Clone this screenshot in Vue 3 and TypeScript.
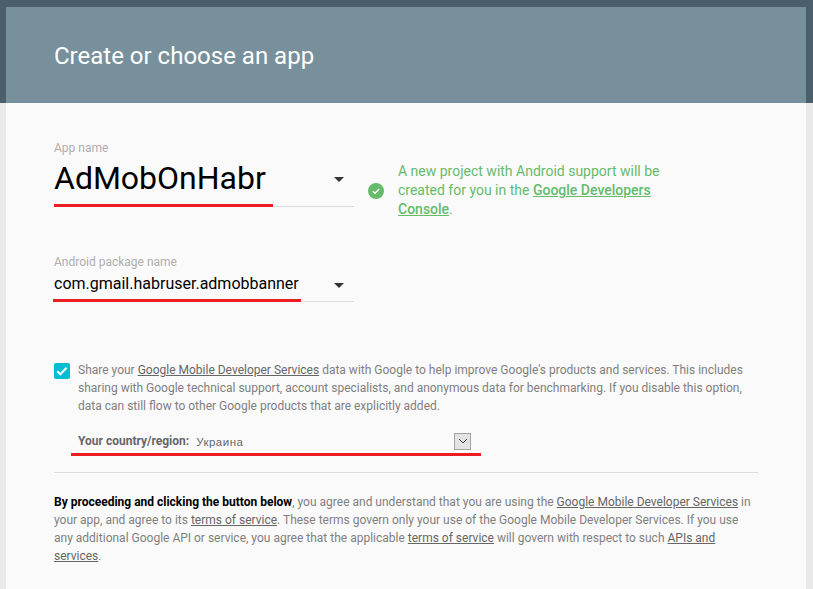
<script setup lang="ts">
const flag = true
</script>

<template>
  <div class="page">
    <div class="band"></div>
    <main class="card">
      <header class="head"><h1>Create or choose an app</h1></header>
      <div class="body">
        <div class="row-first">
          <div class="field first">
            <label>App name</label>
            <div class="value big">AdMobOnHabr<span class="caret"></span></div>
            <i class="mark m1"></i>
          </div>
          <div class="note">
            <svg width="16" height="16" viewBox="0 0 16 16" class="ok">
              <circle cx="8" cy="8" r="8" fill="#66bb6a" />
              <path d="M4.8 8.2l2.2 2.1 4.2-4.3" fill="none" stroke="#fff" stroke-width="1.4" />
            </svg>
            <p>A new project with Android support will be created for you in the <a href="#">Google Developers Console</a>.</p>
          </div>
        </div>
        <div class="field second">
          <label>Android package name</label>
          <div class="value mid">com.gmail.habruser.admobbanner<span class="caret"></span></div>
          <i class="mark m2"></i>
        </div>
        <div class="share">
          <span class="check" v-if="flag">
            <svg width="16" height="16" viewBox="0 0 16 16">
              <path d="M3.2 8.3l3.1 3 6.3-6.6" fill="none" stroke="#fff" stroke-width="2" />
            </svg>
          </span>
          <div class="share-text">
            <p>Share your <a href="#">Google Mobile Developer Services</a> data with Google to help improve Google's products and services. This includes sharing with Google technical support, account specialists, and anonymous data for benchmarking. If you disable this option, data can still flow to other Google products that are explicitly added.</p>
            <div class="country">
              <b>Your country/region:</b>
              <div class="select">
                <span>Украина</span>
                <span class="sel-btn">
                  <svg width="10" height="6" viewBox="0 0 10 6"><path d="M1 1l4 4 4-4" fill="none" stroke="#444" stroke-width="1" /></svg>
                </span>
              </div>
              <i class="mark m3"></i>
            </div>
          </div>
        </div>
        <hr />
        <p class="legal"><b>By proceeding and clicking the button below</b>, you agree and understand that you are using the <a href="#">Google Mobile Developer Services</a> in your app, and agree to its <a href="#">terms of service</a>. These terms govern only your use of the Google Mobile Developer Services. If you use any additional Google API or service, you agree that the applicable <a href="#">terms of service</a> will govern with respect to such <a href="#">APIs and services</a>.</p>
      </div>
    </main>
  </div>
</template>

<style scoped>
.page {
  position: relative;
  height: 589px;
  overflow: hidden;
  background: #e9e9e9;
  font-family: Roboto, "Noto Sans", sans-serif;
  padding: 7px 7px 0 6px;
  box-sizing: border-box;
}
.band {
  position: absolute;
  left: 0;
  right: 0;
  top: 0;
  height: 103px;
  background: #4a5f69;
}
.card {
  position: relative;
  background: #fafafa;
  height: 582px;
}
.head {
  height: 96px;
  box-sizing: border-box;
  background: #78909c;
  padding: 34px 48px 0;
}
h1 {
  margin: 0;
  font-size: 24px;
  line-height: 30px;
  font-weight: 400;
  color: #fff;
}
.body {
  padding: 38px 48px 0;
}
.row-first {
  display: flex;
  align-items: flex-start;
}
.field {
  position: relative;
  width: 300px;
}
label {
  display: block;
  font-size: 12px;
  line-height: 14px;
  color: #b0aeae;
}
.value {
  position: relative;
  border-bottom: 1px solid #ddd;
  color: #000;
}
.big {
  font-size: 32px;
  line-height: 47px;
  height: 51px;
}
.mid {
  font-size: 16px;
  line-height: 24px;
  margin-top: 3px;
  height: 29px;
}
.caret {
  position: absolute;
  right: 10px;
  top: 50%;
  margin-top: -4px;
  border-left: 5px solid transparent;
  border-right: 5px solid transparent;
  border-top: 5px solid #333;
}
.mark {
  position: absolute;
  display: block;
  height: 3px;
  background: #ed1c24;
}
.m1 { left: 0; width: 219px; bottom: 0; }
.m2 { left: -1px; width: 248px; bottom: 0; }
.m3 { left: -7px; width: 410px; top: 21px; }
.note {
  display: flex;
  align-items: center;
  margin-left: 14px;
  margin-top: 21px;
  color: #66bb6a;
}
.ok {
  flex: none;
  margin-right: 14px;
}
.note p {
  margin: 0;
  width: 272px;
  font-size: 14px;
  line-height: 19px;
}
.note a {
  color: #66bb6a;
  font-weight: 500;
}
.second {
  margin-top: 36px;
}
.share {
  display: flex;
  margin-top: 59px;
}
.check {
  flex: none;
  width: 16px;
  height: 16px;
  border-radius: 2px;
  background: #00bcd4;
  margin: 2px 8px 0 0;
}
.check svg { display: block; }
.share-text {
  flex: 1;
  font-size: 12px;
  line-height: 18px;
  color: #808080;
}
.share-text p {
  margin: 0;
}
a {
  color: #666;
  text-decoration: underline;
}
.country {
  position: relative;
  display: flex;
  align-items: center;
  margin-top: 17px;
  height: 18px;
  width: 393px;
}
.country b {
  font-weight: 700;
  color: #666;
}
.select {
  flex: 1;
  display: flex;
  align-items: center;
  justify-content: space-between;
  margin-left: 7px;
  font-family: "Liberation Sans", Arial, sans-serif;
  font-size: 11.5px;
  letter-spacing: 0.5px;
  color: #666;
}
.select > span:first-child {
  padding-top: 1px;
}
.sel-btn {
  width: 17px;
  height: 17px;
  box-sizing: border-box;
  background: #e3e3e3;
  border: 1px solid #a5a5a5;
  display: flex;
  align-items: center;
  justify-content: center;
}
hr {
  margin: 22px 0 0;
  border: 0;
  border-top: 1px solid #ddd;
}
.legal {
  margin: 20px 0 0;
  font-size: 12px;
  line-height: 18px;
  color: #808080;
}
.legal b {
  color: #000;
  font-weight: 700;
}
</style>
